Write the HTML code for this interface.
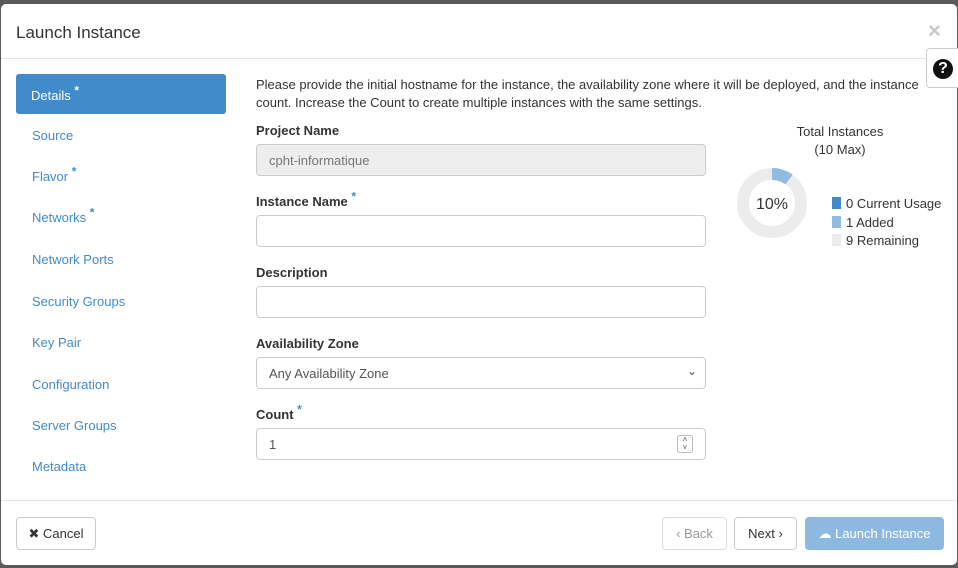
<!DOCTYPE html>
<html><head><style>
*{box-sizing:border-box}
body{margin:0;width:958px;height:568px;background:#5a5a5a;font-family:"Liberation Sans",sans-serif;overflow:hidden;position:relative;color:#333;font-size:13px}
.modal{position:absolute;left:1px;top:4px;width:956px;height:561px;background:#fff;border-radius:5px}
.title{position:absolute;left:15px;top:19px;font-size:17px;color:#333}
.close{position:absolute;left:927px;top:14px;font-size:22px;color:#c8c8c8;font-weight:bold}
.hr1{position:absolute;left:0;top:54px;width:100%;border-top:1px solid #e5e5e5}
.hr2{position:absolute;left:0;top:496px;width:100%;border-top:1px solid #e5e5e5}
.help{position:absolute;left:926px;top:48px;width:34px;height:40px;background:#fff;border:1px solid #ccc;border-right:none;border-radius:4px 0 0 4px}
.help span{position:absolute;left:6px;top:10px;width:20px;height:20px;border-radius:50%;background:#111;color:#fff;font-weight:bold;font-size:16px;text-align:center;line-height:20px}
.nav a{position:absolute;left:31px;color:#428bca;font-size:13px;text-decoration:none}
.nav .act{left:15px;top:70px;width:210px;height:40px;background:#428bca;color:#fff;border-radius:3px;padding:14px 0 0 15px}
sup{font-size:12px;font-weight:bold;line-height:0}
.desc{position:absolute;left:255px;top:72px;width:675px;line-height:18px;font-size:13px}
.lbl{position:absolute;left:255px;font-weight:bold;font-size:13px}
.lbl sup{color:#428bca}
.inp{position:absolute;left:255px;width:450px;height:32px;border:1px solid #ccc;border-radius:4px;padding:8px 12px;font-size:13px;color:#555}
.chart{position:absolute;left:735px;top:163px;width:72px;height:72px}
.leg{position:absolute;left:831px;font-size:13px}
.leg i{display:inline-block;width:9px;height:12px;margin-right:5px;vertical-align:-1px}
.btn{position:absolute;top:513px;height:33px;border:1px solid #ccc;border-radius:4px;font-size:13px;text-align:center;line-height:31px;background:#fff}
</style></head><body>
<div class="modal">
<div class="title">Launch Instance</div>
<div class="close">×</div>
<div class="hr1"></div>
<div class="nav">
<a class="act">Details <sup>*</sup></a>
<a style="top:124px">Source</a>
<a style="top:165px">Flavor <sup>*</sup></a>
<a style="top:206px">Networks <sup>*</sup></a>
<a style="top:248px">Network Ports</a>
<a style="top:290px">Security Groups</a>
<a style="top:331px">Key Pair</a>
<a style="top:373px">Configuration</a>
<a style="top:414px">Server Groups</a>
<a style="top:455px">Metadata</a>
</div>
<div class="desc">Please provide the initial hostname for the instance, the availability zone where it will be deployed, and the instance count. Increase the Count to create multiple instances with the same settings.</div>
<div class="lbl" style="top:119px">Project Name</div>
<div class="inp" style="top:140px;background:#eee;color:#777">cpht-informatique</div>
<div class="lbl" style="top:190px">Instance Name <sup>*</sup></div>
<div class="inp" style="top:211px"></div>
<div class="lbl" style="top:261px">Description</div>
<div class="inp" style="top:282px"></div>
<div class="lbl" style="top:332px">Availability Zone</div>
<div class="inp" style="top:353px">Any Availability Zone<span style="position:absolute;right:8px;top:6px;font-size:12px">&#8964;</span></div>
<div class="lbl" style="top:403px">Count <sup>*</sup></div>
<div class="inp" style="top:424px">1<span style="position:absolute;right:12px;top:6px;width:16px;height:18px;border:1px solid #bbb;border-radius:3px;font-size:8px;line-height:8px;text-align:center">&#708;<br>&#709;</span></div>
<div style="position:absolute;left:740px;top:119px;width:198px;text-align:center;line-height:18px">Total Instances<br>(10 Max)</div>
<svg class="chart" viewBox="0 0 72 72"><circle cx="36" cy="36" r="29" fill="none" stroke="#ececec" stroke-width="12"/><path d="M36 7 A29 29 0 0 1 53.05 12.54" fill="none" stroke="#8fbce0" stroke-width="12"/><text x="36" y="42" text-anchor="middle" font-size="16" font-family="Liberation Sans" fill="#333">10%</text></svg>
<div class="leg" style="top:192px"><i style="background:#428bca"></i>0 Current Usage</div>
<div class="leg" style="top:211px"><i style="background:#8fbce0"></i>1 Added</div>
<div class="leg" style="top:229px"><i style="background:#ececec"></i>9 Remaining</div>
<div class="hr2"></div>
<div class="btn" style="left:15px;width:80px">&#10006; Cancel</div>
<div class="btn" style="left:661px;width:65px;color:#999;border-color:#ddd">‹ Back</div>
<div class="btn" style="left:733px;width:63px">Next ›</div>
<div class="btn" style="left:804px;width:139px;background:#8db8e0;border-color:#8db8e0;color:#fff">&#9729; Launch Instance</div>
</div>
<div class="help"><span>?</span></div>
</body></html>
